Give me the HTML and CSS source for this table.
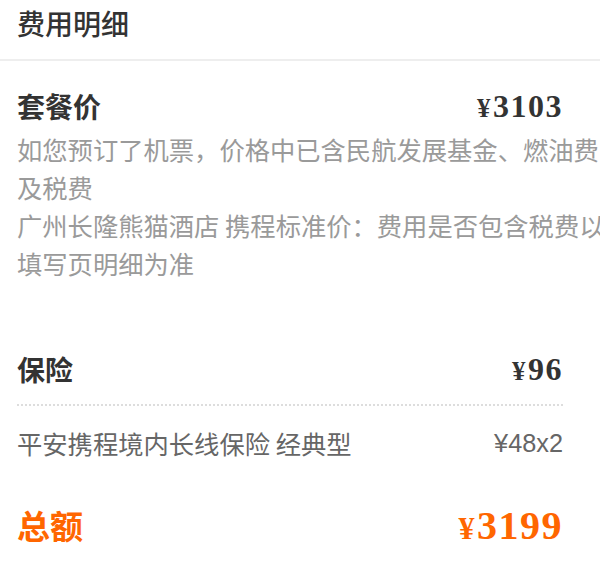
FILE: index.html
```html
<!DOCTYPE html>
<html lang="zh-CN">
<head>
    <meta charset="UTF-8">
    <meta name="viewport" content="width=device-width, initial-scale=1.0">
    <title>费用明细</title>
    <link rel="stylesheet" href="styles.css">
</head>
<body>
    <div class="detail">
        <div class="detail-head">费用明细</div>

        <div class="section package">
            <div class="row">
                <span class="label">套餐价</span>
                <span class="price"><i>¥</i>3103</span>
            </div>
            <div class="desc">
                <p>如您预订了机票，价格中已含民航发展基金、燃油费及税费</p>
                <p>广州长隆熊猫酒店 携程标准价：费用是否包含税费以填写页明细为准</p>
            </div>
        </div>

        <div class="section insurance">
            <div class="row">
                <span class="label">保险</span>
                <span class="price"><i>¥</i>96</span>
            </div>
            <div class="item">
                <span>平安携程境内长线保险 经典型</span>
                <span class="item-price">¥48x2</span>
            </div>
        </div>

        <div class="row total">
            <span class="label">总额</span>
            <span class="price"><i>¥</i>3199</span>
        </div>
    </div>
</body>
</html>
```

FILE: styles.css
```css
html, body {
    overflow-x: hidden;
}
body {
    margin: 0;
    background: #fff;
    font-family: "Noto Sans CJK SC", "Liberation Sans", sans-serif;
    color: #333;
}
.detail-head {
    font-size: 28px;
    font-weight: 500;
    line-height: 40px;
    padding: 3px 17px 16px;
    border-bottom: 2px solid #eeeeee;
}
.section, .total {
    padding: 0 37px 0 17px;
}
.package {
    padding-top: 25px;
}
.row {
    display: flex;
    justify-content: space-between;
    align-items: center;
    height: 40px;
}
.label {
    font-size: 28px;
    font-weight: bold;
}
.price {
    font-family: "Liberation Serif", serif;
    font-size: 32px;
    font-weight: bold;
    letter-spacing: 1.5px;
}
.price i {
    font-style: normal;
    font-size: 27px;
    margin-right: 1px;
}
/* wider than the row on purpose: the long lines run past the right edge */
.desc {
    width: 595px;
    margin-top: 4px;
    font-size: 25.3px;
    line-height: 38px;
    color: #9a9a9a;
}
.desc p {
    margin: 0;
}
.insurance {
    padding-top: 67px;
}
.insurance .row {
    padding-bottom: 15px;
    border-bottom: 2px dotted #dddddd;
}
.item {
    display: flex;
    justify-content: space-between;
    align-items: center;
    height: 40px;
    margin-top: 17px;
    font-size: 25.3px;
    color: #666;
}
.item-price {
    font-family: "Liberation Sans", sans-serif;
}
.total {
    height: 50px;
    margin-top: 37px;
    color: #ff6600;
}
.total .label {
    font-size: 33px;
}
.total .price {
    font-size: 40px;
}
.total .price i {
    font-size: 32px;
}
```
